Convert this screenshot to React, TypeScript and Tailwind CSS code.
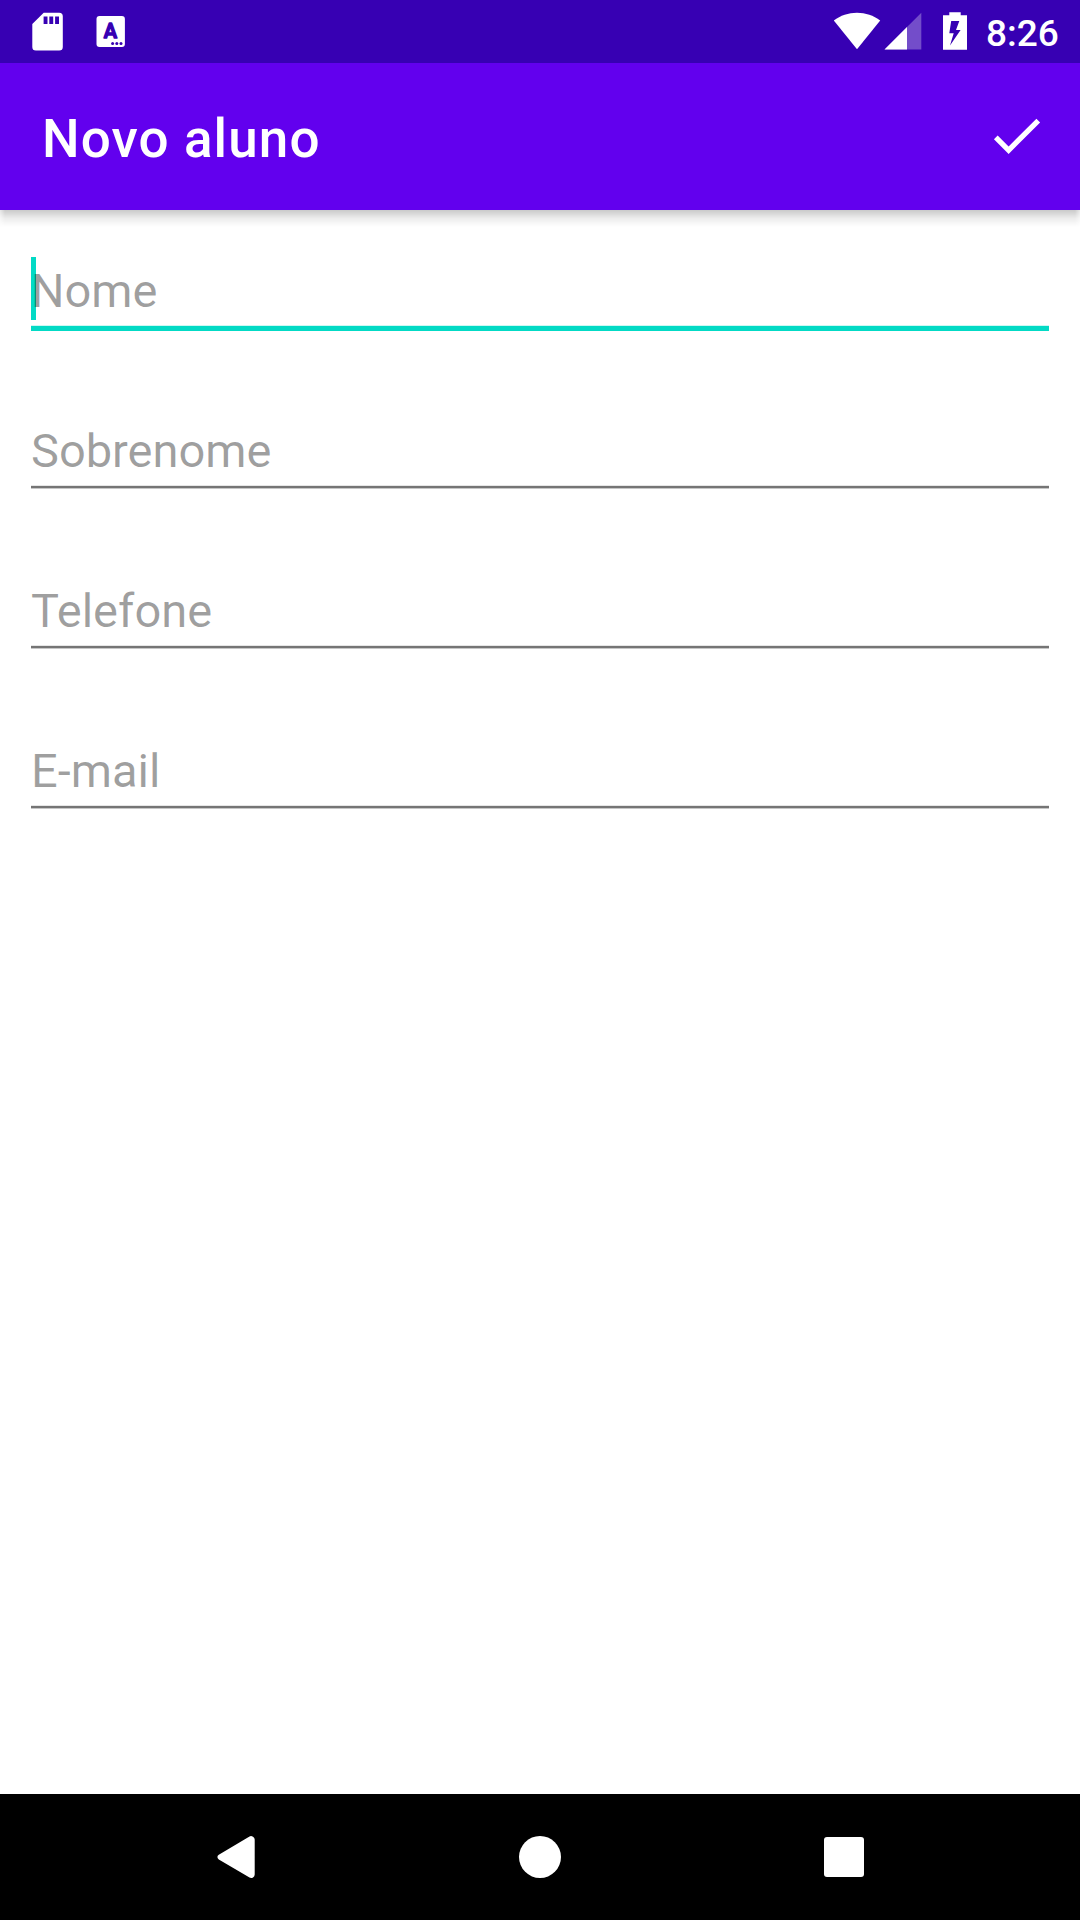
import React from "react";

const fields = ["Nome", "Sobrenome", "Telefone", "E-mail"];

function StatusBar() {
  return (
    <div className="flex h-[63px] shrink-0 items-start justify-between bg-[#3700b3]">
      <svg className="h-[63px] w-[140px]" viewBox="0 0 140 63" fill="#fff">
        <path
          fillRule="evenodd"
          d="M43.7 12.7H59.2a3.6 3.6 0 0 1 3.6 3.6V47a3.6 3.6 0 0 1-3.6 3.6H35.9a3.6 3.6 0 0 1-3.6-3.6V24.1ZM43.6 16.6V24h3.9V16.6ZM49.3 16.6V24h3.9V16.6ZM55.1 16.6V24H59V16.6Z"
        />
        <rect x="96.5" y="16" width="28.4" height="31" rx="3" />
        <text
          x="110.5"
          y="38.3"
          textAnchor="middle"
          className="font-['Roboto'] text-[20px] font-medium"
          fill="#3700b3"
          stroke="#3700b3"
          strokeWidth="1.5"
          strokeLinejoin="round"
        >
          A
        </text>
        <g fill="#3700b3">
          <circle cx="112.6" cy="43.5" r="1.5" />
          <circle cx="116.8" cy="43.5" r="1.5" />
          <circle cx="121" cy="43.5" r="1.5" />
        </g>
      </svg>
      <div className="flex">
        <svg className="h-[63px] w-[155px]" viewBox="820 0 155 63" fill="#fff">
          <path d="M833.8 20.4C840.5 15.6 848.4 12.8 857 12.8S873.5 15.6 880.2 20.4L857 49.3Z" />
          <path d="M921.3 12.8V49.6H884.5Z" opacity=".3" />
          <path d="M907 27.1V49.6H884.5Z" />
          <path
            fillRule="evenodd"
            d="M949.3 12.3H960.7V15.2H967V49.7H943V15.2H949.3ZM951.2 21L949.3 33.2H953.7L950 45.6L960.6 30H956L959.3 21Z"
          />
        </svg>
        <span className="mt-[12px] w-[105px] pl-[11px] font-['Roboto'] text-[37px] leading-[43px] font-medium text-white">
          8:26
        </span>
      </div>
    </div>
  );
}

function AppBar() {
  return (
    <header className="relative z-10 flex h-[147px] shrink-0 items-center justify-between bg-[#6200ee] pr-8 pl-[42px]">
      <h1 className="mt-[5px] text-[53px] leading-[62px] font-medium tracking-[1.1px] text-white">
        Novo aluno
      </h1>
      <svg className="mb-[2px] size-[63px]" viewBox="0 0 24 24" fill="#fff">
        <path d="M9 16.17L4.83 12l-1.42 1.41L9 19 21 7l-1.41-1.41z" />
      </svg>
      <div className="absolute inset-x-0 top-full h-[17px] bg-linear-to-b from-black/21 via-black/7 to-transparent mask-x-from-[calc(100%-5px)] mask-x-to-[calc(100%+4px)]" />
    </header>
  );
}

function Field({ label, focused }: { label: string; focused: boolean }) {
  return (
    <label className="relative block h-[160px] pt-[53px]">
      {focused && <span className="absolute top-[47px] left-0 h-[63px] w-[5px] bg-[#03dac5]" />}
      <input
        placeholder={label}
        aria-label={label}
        className="relative block h-[55px] w-full bg-transparent p-0 text-[47px] leading-[55px] outline-none placeholder:text-black/38"
      />
      {focused ? (
        <span className="mt-[7px] block h-[6px] w-full border-t border-[#03dac5]/20 bg-[#03dac5] bg-clip-padding" />
      ) : (
        <span className="mt-[7px] block h-[4px] w-full border-t border-b border-t-black/10 border-b-black/22 bg-[#757575] bg-clip-padding" />
      )}
    </label>
  );
}

function NavBar() {
  return (
    <nav className="flex h-[126px] shrink-0 items-center justify-between bg-black pr-[216px] pl-[217px]">
      <svg className="h-[42px] w-[38px]" viewBox="0 0 38 42" fill="#fff">
        <path d="M1.8 18.8L32.5.5Q34.2-.4 36 .8Q37.7 1.8 37.7 3.5V38.5Q37.7 40.4 36 41.4Q34.2 42.4 32.5 41.5L1.8 23.4Q.4 22.5 .4 21.1T1.8 18.8Z" />
      </svg>
      <span className="size-[42px] rounded-full bg-white" />
      <span className="size-[40px] rounded-[3px] bg-white" />
    </nav>
  );
}

export default function App() {
  return (
    <div className="flex h-[1920px] w-[1080px] flex-col overflow-hidden bg-white font-['Roboto',sans-serif]">
      <StatusBar />
      <AppBar />
      <main className="flex-1 px-[31px]">
        {fields.map((label, i) => (
          <Field key={label} label={label} focused={i === 0} />
        ))}
      </main>
      <NavBar />
    </div>
  );
}
